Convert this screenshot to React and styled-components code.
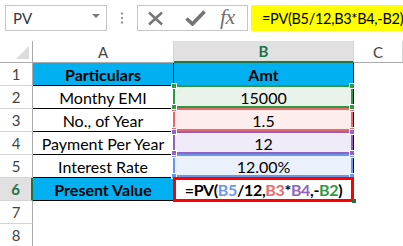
import React from "react";
import styled, { createGlobalStyle, css } from "styled-components";

const Global = createGlobalStyle`
  html, body { margin: 0; padding: 0; background: #fff; overflow: hidden; }
  * { box-sizing: border-box; }
  body { font-family: Lato, "Open Sans", sans-serif; }
`;

const Page = styled.div`
  width: 403px;
  height: 246px;
  overflow: hidden;
  background: #fff;
`;

const Toolbar = styled.div`
  height: 41px;
  display: flex;
  align-items: flex-start;
  padding: 5px 0 0 5px;
`;

const NameBox = styled.div`
  flex: 0 0 102px;
  height: 26px;
  border: 1px solid #c6c6c6;
  display: flex;
  align-items: center;
  justify-content: space-between;
  padding: 0 6px 0 7px;
  font-family: Lato, sans-serif;
  font-size: 15px;
  color: #2b3a4a;
`;

const Caret = styled.span`
  width: 0;
  height: 0;
  border-left: 4px solid transparent;
  border-right: 4px solid transparent;
  border-top: 4px solid #7a7a7a;
  margin-top: -4px;
`;

const DotsArea = styled.div`
  flex: 0 0 30px;
  height: 26px;
  display: flex;
  align-items: center;
  justify-content: center;
`;

const ButtonBox = styled.div`
  flex: 0 0 111px;
  height: 26px;
  border: 1px solid #c6c6c6;
  display: flex;
  align-items: center;
  padding-left: 9px;
`;

const IconSlot = styled.span`
  display: inline-flex;
  align-items: center;
  justify-content: center;
  margin-right: ${(p) => p.$mr || 0}px;
`;

const Fx = styled.span`
  font-family: "Liberation Serif", serif;
  font-style: italic;
  font-size: 22px;
  color: #707070;
  letter-spacing: -0.5px;
  line-height: 1;
  margin-top: -2px;
`;

const FormulaBar = styled.div`
  flex: 1 1 auto;
  min-width: 0;
  overflow: hidden;
  margin-left: 3px;
  height: 26px;
  background: #ffff00;
  display: flex;
  align-items: center;
  padding-left: 11px;
  font-family: Lato, sans-serif;
  font-size: 14.5px;
  letter-spacing: -0.3px;
  color: #000;
  white-space: nowrap;
`;

const Grid = styled.div`
  display: grid;
  grid-template-columns: 33px 141px 180px 1fr;
  grid-template-rows: 22px repeat(8, 23px);
`;

const Corner = styled.div`
  position: relative;
  border-right: 1px solid #ababab;
  border-bottom: 1px solid #ababab;
  &::after {
    content: "";
    position: absolute;
    right: 3px;
    bottom: 3px;
    width: 0;
    height: 0;
    border-left: 13px solid transparent;
    border-bottom: 13px solid #dcdcdc;
  }
`;

const ColHeader = styled.div`
  display: flex;
  align-items: center;
  justify-content: center;
  font-family: Lato, sans-serif;
  font-size: 15px;
  color: #444;
  border-right: 1px solid #d4d4d4;
  border-bottom: 1px solid #ababab;
  ${(p) =>
    p.$selected &&
    css`
      background: #e1e1e1;
      color: #217346;
      font-weight: 700;
      border-bottom: 2px solid #217346;
    `}
`;

const RowHeader = styled.div`
  display: flex;
  align-items: center;
  justify-content: center;
  font-family: Lato, sans-serif;
  font-size: 15px;
  color: #444;
  border-right: 1px solid #ababab;
  border-bottom: 1px solid #d4d4d4;
  ${(p) =>
    p.$selected &&
    css`
      background: #e1e1e1;
      color: #217346;
      font-weight: 700;
      border-right: 2px solid #217346;
    `}
`;

const Cell = styled.div`
  position: relative;
  display: flex;
  align-items: center;
  justify-content: center;
  padding-top: 1px;
  font-family: Lato, sans-serif;
  font-size: 16px;
  color: #000;
  white-space: nowrap;
  background: ${(p) => p.$bg || "transparent"};
  font-weight: ${(p) => (p.$bold ? 700 : 400)};
  letter-spacing: ${(p) => (p.$tight ? "-0.35px" : "normal")};
  border-right: 1px solid ${(p) => (p.$empty ? "transparent" : "#000")};
  border-bottom: 1px solid ${(p) => (p.$empty ? "transparent" : "#000")};
`;

const RefBox = styled.span`
  position: absolute;
  top: -1px;
  left: -1px;
  right: 0;
  bottom: 0;
  border: 2px solid ${(p) => p.$color};
  z-index: ${(p) => p.$z};
  pointer-events: none;
`;

const Handle = styled.span`
  position: absolute;
  width: 6px;
  height: 6px;
  background: ${(p) => p.$color};
  border: 1px solid #fff;
  ${(p) => (p.$top ? "top: -4px;" : "bottom: -4px;")}
  ${(p) => (p.$left ? "left: -4px;" : "right: -4px;")}
`;

const ActiveBox = styled.span`
  position: absolute;
  top: -1px;
  left: -1px;
  right: -1px;
  bottom: -2px;
  border: 3px solid #ff0000;
  z-index: 5;
  pointer-events: none;
`;

const FillHandle = styled.span`
  position: absolute;
  right: -3px;
  bottom: -3px;
  width: 4px;
  height: 4px;
  background: #217346;
  z-index: 6;
`;

const Ref = styled.span`
  color: ${(p) => p.$color};
`;

const COLORS = {
  green: "#2e9a46",
  red: "#e8686c",
  purple: "#8f62c4",
  blue: "#6b96ee",
};

function RefHighlight({ color, z }) {
  return (
    <RefBox $color={color} $z={z}>
      <Handle $color={color} $top $left />
      <Handle $color={color} $top />
      <Handle $color={color} $left />
      <Handle $color={color} />
    </RefBox>
  );
}

const rows = [
  { a: "Particulars", b: "Amt", fill: "#00b0f0", bold: true },
  { a: "Monthy EMI", b: "15000", bTint: "#e9f3ea", ref: "green", z: 3 },
  { a: "No., of Year", b: "1.5", bTint: "#fdeded", ref: "red", z: 1 },
  { a: "Payment Per Year", b: "12", bTint: "#efebf7", ref: "purple", z: 3 },
  { a: "Interest Rate", b: "12.00%", bTint: "#ebf1fc", ref: "blue", z: 1 },
];

function XIcon() {
  return (
    <svg width="17" height="15" viewBox="0 0 17 15">
      <path d="M2 1.5 L15 13.5 M15 1.5 L2 13.5" stroke="#747474" strokeWidth="2.4" fill="none" />
    </svg>
  );
}

function CheckIcon() {
  return (
    <svg width="21" height="16" viewBox="0 0 21 16">
      <path d="M1.5 8.5 L7.5 14 L19.5 1.5" stroke="#747474" strokeWidth="3.6" fill="none" strokeLinejoin="miter" />
    </svg>
  );
}

function Dots() {
  return (
    <svg width="4" height="12" viewBox="0 0 4 12">
      <circle cx="2" cy="1.5" r="1.2" fill="#9a9a9a" />
      <circle cx="2" cy="6" r="1.2" fill="#9a9a9a" />
      <circle cx="2" cy="10.5" r="1.2" fill="#9a9a9a" />
    </svg>
  );
}

export default function App() {
  return (
    <Page>
      <Global />
      <Toolbar>
        <NameBox>
          PV
          <Caret />
        </NameBox>
        <DotsArea>
          <Dots />
        </DotsArea>
        <ButtonBox>
          <IconSlot $mr={21}>
            <XIcon />
          </IconSlot>
          <IconSlot $mr={14}>
            <CheckIcon />
          </IconSlot>
          <Fx>fx</Fx>
        </ButtonBox>
        <FormulaBar>=PV(B5/12,B3*B4,-B2)</FormulaBar>
      </Toolbar>
      <Grid>
        <Corner />
        <ColHeader>A</ColHeader>
        <ColHeader $selected>B</ColHeader>
        <ColHeader>C</ColHeader>

        {rows.map((r, i) => (
          <React.Fragment key={i}>
            <RowHeader>{i + 1}</RowHeader>
            <Cell $bg={r.fill} $bold={r.bold}>
              {r.a}
            </Cell>
            <Cell $bg={r.fill || r.bTint} $bold={r.bold}>
              {r.b}
              {r.ref && <RefHighlight color={COLORS[r.ref]} z={r.z} />}
            </Cell>
            <Cell $empty />
          </React.Fragment>
        ))}

        <RowHeader $selected>6</RowHeader>
        <Cell $bg="#00b0f0" $bold>
          Present Value
        </Cell>
        <Cell $bold $tight>
          <span>
            =PV(<Ref $color={COLORS.blue}>B5</Ref>/12,<Ref $color={COLORS.red}>B3</Ref>*
            <Ref $color={COLORS.purple}>B4</Ref>,-<Ref $color={COLORS.green}>B2</Ref>)
          </span>
          <ActiveBox />
          <FillHandle />
        </Cell>
        <Cell $empty />

        <RowHeader>7</RowHeader>
        <Cell $empty />
        <Cell $empty />
        <Cell $empty />

        <RowHeader>8</RowHeader>
        <Cell $empty />
        <Cell $empty />
        <Cell $empty />
      </Grid>
    </Page>
  );
}
